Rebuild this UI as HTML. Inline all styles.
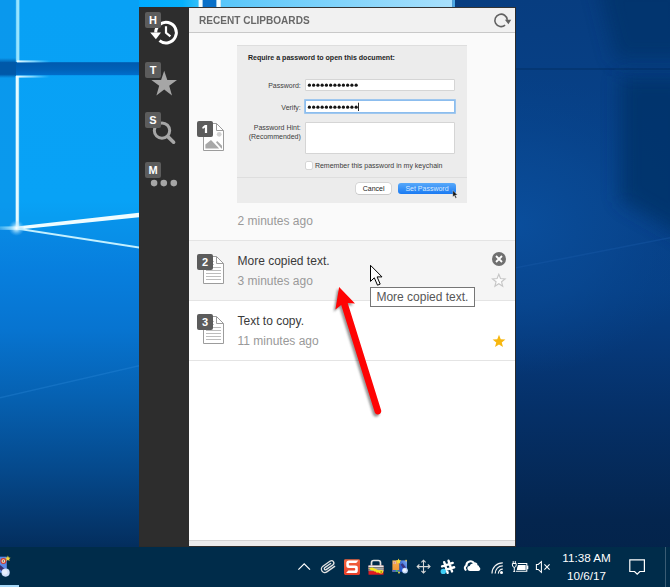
<!DOCTYPE html>
<html>
<head>
<meta charset="utf-8">
<title>Recent Clipboards</title>
<style>
html,body{margin:0;padding:0;}
body{width:670px;height:587px;overflow:hidden;position:relative;background:#073d80;font-family:"Liberation Sans",sans-serif;}
.abs{position:absolute;}
#bg{position:absolute;left:0;top:0;width:670px;height:587px;}
#taskbar{position:absolute;left:0;top:547px;width:670px;height:40px;background:#002c4a;}
.clk{position:absolute;left:536.6px;width:100px;text-align:center;color:#fff;font-size:11.7px;line-height:14px;white-space:nowrap;}
#win{position:absolute;left:139px;top:7px;width:377px;height:540px;background:#fff;}
#side{position:absolute;left:0;top:0;width:50px;height:540px;background:#2d2d2d;}
#hdr{position:absolute;left:50px;top:0;width:326px;height:25px;background:#f1f1f1;border-top:1px solid #333;border-bottom:1px solid #c9c9c9;box-sizing:border-box;height:26px;}
#hdr .t{position:absolute;left:10.4px;top:6px;font-size:11.3px;line-height:13px;font-weight:bold;color:#686868;white-space:nowrap;transform:scaleX(0.89);transform-origin:0 0;}
#rb{position:absolute;right:0;top:0;width:1px;height:540px;background:#2b2b2b;}
#bb{position:absolute;left:0;top:539px;width:377px;height:1px;background:#2b2b2b;}
.item{position:absolute;left:50px;width:326px;box-sizing:border-box;border-bottom:1px solid #e4e4e4;}
.badge{position:absolute;width:16px;height:16px;background:#5c5c5c;border-radius:2px;color:#fff;font-size:11px;font-weight:bold;text-align:center;line-height:16px;}
.sb{position:absolute;width:16px;height:16px;background:#5c5c5c;border-radius:2px;color:#fff;font-size:11px;font-weight:bold;text-align:center;line-height:16px;left:6px;}
.title{position:absolute;left:48.5px;font-size:12px;line-height:14px;color:#3a3a3a;white-space:nowrap;}
.time{position:absolute;left:48.5px;font-size:12px;line-height:14px;color:#999;white-space:nowrap;}

#thumb{position:absolute;left:48px;top:12px;width:230px;height:157.5px;background:#ececec;box-shadow:inset 0 1px 0 #dedede;box-sizing:border-box;font-size:7px;line-height:9px;color:#333;overflow:hidden;}
#thumb > *{margin-top:-1px;}
#thumb .h{position:absolute;left:11px;top:9.1px;font-weight:bold;color:#1e1e1e;white-space:nowrap;font-size:7.05px;}
#thumb .lbl{position:absolute;right:166.2px;white-space:nowrap;text-align:right;color:#3c3c3c;}
#thumb .inp{position:absolute;left:69.4px;width:147.3px;background:#fff;box-shadow:0 0 0 0.6px #c6c6c6;}
#thumb .inp.foc{box-shadow:0 0 0 1.8px #8cbdee;}
#thumb .cb{position:absolute;left:68.7px;top:118px;width:6.5px;height:6.7px;background:#fff;box-shadow:0 0 0 0.5px #bdbdbd;border-radius:1px;}
#thumb .cbt{position:absolute;left:77.9px;top:116.9px;white-space:nowrap;color:#3c3c3c;}
#thumb .sep{position:absolute;left:0;top:133px;width:230px;height:1px;background:#dedede;}
#thumb .btn{position:absolute;top:139px;height:11.2px;line-height:11.4px;border-radius:3px;text-align:center;font-size:7px;}
#foot{position:absolute;left:50px;top:533px;width:326px;height:6px;background:#ececec;border-top:1px solid #d4d4d4;box-sizing:border-box;}
#tip{position:absolute;left:370px;top:287px;width:105px;height:20px;box-sizing:border-box;border:1px solid #767676;background:#fff;color:#575757;font-size:12px;line-height:19px;padding-left:5.4px;white-space:nowrap;}
</style>
</head>
<body>
<svg id="bg" width="670" height="587" viewBox="0 0 670 587">
  <defs>
    <linearGradient id="gA" x1="0" y1="0" x2="0" y2="587" gradientUnits="userSpaceOnUse"><stop offset="0.0" stop-color="#08a1f5"/><stop offset="0.3407" stop-color="#08a2f6"/><stop offset="0.3782" stop-color="#089cf0"/><stop offset="1.0" stop-color="#089cf0"/></linearGradient>
    <linearGradient id="gB" x1="0" y1="0" x2="0" y2="587" gradientUnits="userSpaceOnUse"><stop offset="0.0" stop-color="#0894ec"/><stop offset="0.3663" stop-color="#0894ec"/><stop offset="0.4259" stop-color="#088de6"/><stop offset="1.0" stop-color="#088de6"/></linearGradient>
    <linearGradient id="gC" x1="0" y1="0" x2="0" y2="587" gradientUnits="userSpaceOnUse"><stop offset="0.0" stop-color="#0889e4"/><stop offset="0.3884" stop-color="#0889e4"/><stop offset="0.46" stop-color="#077fde"/><stop offset="0.5622" stop-color="#0774d0"/><stop offset="0.6814" stop-color="#0660b0"/><stop offset="0.8007" stop-color="#05498c"/><stop offset="0.9029" stop-color="#043468"/><stop offset="0.9302" stop-color="#032e5e"/><stop offset="1.0" stop-color="#032e5e"/></linearGradient>
    <linearGradient id="gR" x1="0" y1="0" x2="0" y2="587" gradientUnits="userSpaceOnUse"><stop offset="0.0" stop-color="#073d80"/><stop offset="0.1704" stop-color="#074086"/><stop offset="0.3407" stop-color="#07428a"/><stop offset="0.494" stop-color="#064086"/><stop offset="0.5963" stop-color="#063878"/><stop offset="0.6985" stop-color="#053068"/><stop offset="0.8859" stop-color="#04254e"/><stop offset="1.0" stop-color="#032248"/></linearGradient>
    <radialGradient id="rp" cx="516" cy="225" r="1" gradientUnits="userSpaceOnUse" gradientTransform="translate(516 225) scale(190 150) translate(-516 -225)">
      <stop offset="0" stop-color="#0a4e9c" stop-opacity="1"/>
      <stop offset="0.5" stop-color="#094892" stop-opacity="0.8"/>
      <stop offset="1" stop-color="#07428a" stop-opacity="0"/>
    </radialGradient>
    <linearGradient id="gt" x1="0" y1="0" x2="1" y2="0">
      <stop offset="0" stop-color="#58c6fa"/>
      <stop offset="1" stop-color="#a8e0fc"/>
    </linearGradient>
    <linearGradient id="gtl" x1="0" y1="0" x2="1" y2="0">
      <stop offset="0" stop-color="#00aaff"/>
      <stop offset="0.7" stop-color="#06b0fa"/>
      <stop offset="1" stop-color="#38c2fa"/>
    </linearGradient>
    <linearGradient id="band" x1="0" y1="0" x2="0" y2="1">
      <stop offset="0" stop-color="#005aae"/>
      <stop offset="0.6" stop-color="#0062ba"/>
      <stop offset="1" stop-color="#006ecc"/>
    </linearGradient>
    <linearGradient id="bandl" x1="0" y1="0" x2="0" y2="1">
      <stop offset="0" stop-color="#0058a8" stop-opacity="0"/>
      <stop offset="0.25" stop-color="#0058a8" stop-opacity="1"/>
      <stop offset="0.8" stop-color="#0058a8" stop-opacity="1"/>
      <stop offset="1" stop-color="#0058a8" stop-opacity="0"/>
    </linearGradient>
    <linearGradient id="hl" x1="0" y1="0" x2="1" y2="0">
      <stop offset="0" stop-color="#f0fcff" stop-opacity="1"/>
      <stop offset="0.5" stop-color="#b0e8ff" stop-opacity="0.7"/>
      <stop offset="1" stop-color="#7ad4ff" stop-opacity="0"/>
    </linearGradient>
    <linearGradient id="vl" x1="0" y1="0" x2="1" y2="0">
      <stop offset="0" stop-color="#60c8fc" stop-opacity="0"/>
      <stop offset="0.3" stop-color="#98e4ff" stop-opacity="1"/>
      <stop offset="0.7" stop-color="#98e4ff" stop-opacity="1"/>
      <stop offset="1" stop-color="#60c8fc" stop-opacity="0"/>
    </linearGradient>
    <linearGradient id="vl2" x1="0" y1="0" x2="1" y2="0">
      <stop offset="0" stop-color="#60c8fc" stop-opacity="0"/>
      <stop offset="0.3" stop-color="#e4faff" stop-opacity="1"/>
      <stop offset="0.7" stop-color="#e4faff" stop-opacity="1"/>
      <stop offset="1" stop-color="#60c8fc" stop-opacity="0"/>
    </linearGradient>
    <radialGradient id="glow" cx="0.5" cy="0.5" r="0.5">
      <stop offset="0" stop-color="#fff" stop-opacity="1"/>
      <stop offset="0.35" stop-color="#c8f0ff" stop-opacity="0.7"/>
      <stop offset="1" stop-color="#6cc4ff" stop-opacity="0"/>
    </radialGradient>
    <linearGradient id="lg" x1="0" y1="0" x2="1" y2="0">
      <stop offset="0" stop-color="#9ae4ff" stop-opacity="0.35"/>
      <stop offset="1" stop-color="#d8f8ff" stop-opacity="0.95"/>
    </linearGradient>
    <filter id="b2" x="-40%" y="-40%" width="180%" height="180%"><feGaussianBlur stdDeviation="9"/></filter>
    <filter id="b1" x="-5%" y="-50%" width="110%" height="200%"><feGaussianBlur stdDeviation="0.6"/></filter>
  </defs>
  <!-- left -->
  <rect x="0" y="0" width="200" height="260" fill="url(#gA)"/>
  <rect x="0" y="0" width="16" height="230" fill="#0c92e8" opacity="0.6"/>
  <path d="M16.5 228 L200 207.8 V300 H16.5 Z" fill="url(#gB)"/>
  <path d="M0 228 H16.5 L200 256.4 V587 H0 Z" fill="url(#gC)"/>
  <!-- right -->
  <rect x="450" y="0" width="220" height="587" fill="url(#gR)"/>
  <rect x="516" y="60" width="154" height="330" fill="url(#rp)"/>
  <path d="M620 76 V200 L690 240 V76 Z" fill="#043068" opacity="0.8" filter="url(#b2)"/>
  <rect x="516" y="68" width="154" height="2" fill="#01264e" opacity="0.3"/>
  <path d="M596 -20 H690 V60 H616 Z" fill="#043068" opacity="0.7" filter="url(#b2)"/>
  <path d="M516 267 L670 237 V238.6 L516 268.6 Z" fill="#1a5aa8" opacity="0.4"/>
  <!-- top strip -->
  <rect x="139" y="0" width="62" height="8" fill="url(#gtl)"/>
  <rect x="202" y="0" width="15" height="8" fill="#0870c8"/>
  <rect x="198.6" y="0" width="4" height="8" fill="#eefcff"/>
  <rect x="216.4" y="0" width="4.5" height="8" fill="#f2fdff"/>
  <rect x="220.9" y="0" width="231.6" height="8" fill="url(#gt)"/>
  <rect x="452.4" y="0" width="2.6" height="8" fill="#4aa8e4"/>
  <!-- dark band -->
  <rect x="0" y="62.2" width="140" height="13" fill="url(#band)"/>
  <rect x="0" y="58" width="16" height="20" fill="url(#bandl)"/>
  <!-- bright lines -->
  <rect x="15.2" y="0" width="5" height="62" fill="url(#vl)"/>
  <rect x="14.8" y="76" width="5" height="152" fill="url(#vl2)"/>
  <rect x="17" y="60.4" width="34" height="2" fill="url(#hl)"/>
  <rect x="16" y="75.6" width="34" height="2" fill="url(#hl)"/>
  <!-- rays from bright point -->
  <path d="M16.5 226.4 L139 212.8 V217.2 L16.5 229.8 Z" fill="#eefcff" filter="url(#b1)"/>
  <path d="M16.5 227.4 L139 246.4 V248.4 L16.5 229.6 Z" fill="#c4f0ff" filter="url(#b1)"/>
  <rect x="0" y="226.4" width="17" height="3.4" fill="url(#lg)"/>
  <circle cx="16.5" cy="228" r="8" fill="url(#glow)"/>
  <!-- faint rays lower -->
  <path d="M0 397 L139 365 V366.4 L0 398.4 Z" fill="#3a98e8" opacity="0.25"/>
</svg>


<div id="win">
  <div id="side">
    <!-- history icon -->
    <svg class="abs" style="left:0;top:0" width="50" height="200" viewBox="0 0 50 200">
      <g fill="none" stroke="#fff" stroke-width="3">
        <path d="M16.7 25.6 A10.3 10.3 0 1 1 20.5 33.6"/>
        <path d="M27 19.2 V25.8 L31.4 29.4" stroke-width="2.2"/>
      </g>
      <path d="M11.2 25.6 H22 L16.9 32.2 Z" fill="#fff"/>
      <!-- star -->
      <path d="M25.2 63.8 L28.3 73 L38 73 L30.2 78.8 L33 88.4 L25.2 82.6 L17.4 88.4 L20.2 78.8 L12.4 73 L22.1 73 Z" fill="#a6a6a6"/>
      <!-- magnifier -->
      <circle cx="23" cy="123.6" r="7.7" fill="none" stroke="#a6a6a6" stroke-width="3"/>
      <path d="M28.6 129.4 L34.6 135.2" stroke="#a6a6a6" stroke-width="3.6" stroke-linecap="round"/>
      <!-- dots -->
      <circle cx="15.1" cy="176.1" r="3.3" fill="#a6a6a6"/>
      <circle cx="24.8" cy="176.1" r="3.3" fill="#a6a6a6"/>
      <circle cx="34.8" cy="176.1" r="3.3" fill="#a6a6a6"/>
    </svg>
    <div class="sb" style="top:5px">H</div>
    <div class="sb" style="top:55px">T</div>
    <div class="sb" style="top:105px">S</div>
    <div class="sb" style="top:155px">M</div>
  </div>
  <div id="hdr"><div class="t">RECENT CLIPBOARDS</div>
    <svg class="abs" style="left:304px;top:3px" width="20" height="18" viewBox="0 0 20 18">
      <path d="M12.09 14.15 A6.2 6.2 0 1 1 14.28 8.86" fill="none" stroke="#626262" stroke-width="1.6"/>
      <path d="M11.9 8.8 H18.2 L15.4 13.2 Z" fill="#626262"/>
    </svg>
  </div>

  <!-- item 1 -->
  <div class="item" style="top:26px;height:208px;background:#fafafa;">
    <svg class="abs" style="left:12px;top:88px" width="26" height="32" viewBox="0 0 26 32">
      <path d="M2.5 2.5 H15.5 L22.5 9.5 V29.5 H2.5 Z" fill="#fff" stroke="#9c9c9c" stroke-width="1"/>
      <path d="M15.5 2.5 V9.5 H22.5" fill="none" stroke="#9c9c9c" stroke-width="1"/>
      <circle cx="18.2" cy="13.3" r="2.4" fill="#d2d2d2"/>
      <path d="M4.4 27.5 V23.4 L10 19 L18.2 27.5 Z" fill="#a8a8a8"/>
      <path d="M15 21.2 L16.2 20 L21 24.8 V27.5 H20.4 Z" fill="#a8a8a8"/>
    </svg>
    <div class="badge" style="left:8px;top:88px"><svg width="16" height="16" viewBox="0 0 16 16" style="display:block"><path d="M7.9 3.9 H10.1 V12 H7.9 V6.4 L5.8 7.9 L5.2 6.3 Z" fill="#fff"/></svg></div>
    <div id="thumb">
      <div class="h">Require a password to open this document:</div>
      <div class="lbl" style="top:36.6px">Password:</div>
      <div class="inp" style="top:36px;height:10.2px"></div>
      <div class="lbl" style="top:58.9px">Verify:</div>
      <div class="inp foc" style="top:57.4px;height:10.4px"></div>
      <svg class="abs" style="left:68px;top:34px" width="60" height="36" viewBox="0 0 60 36">
        <g fill="#141414">
          <g id="dr"><circle cx="4.4" cy="7.2" r="1.6"/><circle cx="8.65" cy="7.2" r="1.6"/><circle cx="12.9" cy="7.2" r="1.6"/><circle cx="17.15" cy="7.2" r="1.6"/><circle cx="21.4" cy="7.2" r="1.6"/><circle cx="25.65" cy="7.2" r="1.6"/><circle cx="29.9" cy="7.2" r="1.6"/><circle cx="34.15" cy="7.2" r="1.6"/><circle cx="38.4" cy="7.2" r="1.6"/><circle cx="42.65" cy="7.2" r="1.6"/><circle cx="46.9" cy="7.2" r="1.6"/><circle cx="51.15" cy="7.2" r="1.6"/></g>
          <use href="#dr" y="22"/>
          <rect x="53.1" y="24.7" width="0.9" height="8.3"/>
        </g>
      </svg>
      <div class="lbl" style="top:79.1px">Password Hint:</div>
      <div class="lbl" style="top:88.1px">(Recommended)</div>
      <div class="inp" style="top:79.2px;height:30.2px"></div>
      <div class="cb"></div>
      <div class="cbt">Remember this password in my keychain</div>
      <div class="sep"></div>
      <div class="btn" style="left:118.8px;width:35.7px;background:#fff;color:#222;box-shadow:0 0 0 0.5px #c0c0c0, 0 0.5px 0.5px #bbb;">Cancel</div>
      <div class="btn" style="left:161px;width:58px;background:linear-gradient(#58a9fa,#1a7af2);color:#d8eaff;">Set Password</div>
      <svg class="abs" style="left:215px;top:146.2px" width="6.8" height="9.35" viewBox="0 0 8 11"><path d="M1 0.5 V8 L2.8 6.4 L4.2 9.6 L5.4 9 L4 6 L6.4 6 Z" fill="#111" stroke="#eee" stroke-width="0.4"/></svg>
    </div>
    <div class="time" style="top:180.6px">2 minutes ago</div>
  </div>

  <!-- item 2 -->
  <div class="item" style="top:234px;height:60px;background:#f5f5f5;">
    <svg class="abs doc" style="left:12px;top:13px" width="26" height="32" viewBox="0 0 26 32">
      <path d="M2.5 2.5 H15.5 L22.5 9.5 V29.5 H2.5 Z" fill="#fff" stroke="#9c9c9c" stroke-width="1"/>
      <path d="M15.5 2.5 V9.5 H22.5" fill="none" stroke="#9c9c9c" stroke-width="1"/>
      <path d="M5 13.5 H20 M5 16.5 H20 M5 19.5 H20 M5 22.5 H20 M5 25.5 H20 M11.6 7.5 H13 M11.6 10.5 H13" stroke="#bdbdbd" stroke-width="1"/>
    </svg>
    <div class="badge" style="left:8px;top:13px">2</div>
    <div class="title" style="top:13.4px">More copied text.</div>
    <div class="time" style="top:33.1px">3 minutes ago</div>
    <svg class="abs" style="left:302px;top:9.5px" width="16" height="16" viewBox="0 0 16 16">
      <circle cx="8" cy="8" r="7" fill="#707070"/>
      <path d="M5 5 L11 11 M11 5 L5 11" stroke="#fff" stroke-width="1.8"/>
    </svg>
    <svg class="abs" style="left:302px;top:32px" width="16" height="16" viewBox="0 0 16 16">
      <path d="M7.80 1.30 L9.50 5.55 L14.08 5.86 L10.56 8.80 L11.68 13.24 L7.80 10.80 L3.92 13.24 L5.04 8.80 L1.52 5.86 L6.10 5.55 Z" fill="#fbfbfb" stroke="#c6c6c6" stroke-width="1.15" stroke-linejoin="miter"/>
    </svg>
  </div>

  <!-- item 3 -->
  <div class="item" style="top:294px;height:60px;background:#fff;">
    <svg class="abs doc" style="left:12px;top:13px" width="26" height="32" viewBox="0 0 26 32">
      <path d="M2.5 2.5 H15.5 L22.5 9.5 V29.5 H2.5 Z" fill="#fff" stroke="#9c9c9c" stroke-width="1"/>
      <path d="M15.5 2.5 V9.5 H22.5" fill="none" stroke="#9c9c9c" stroke-width="1"/>
      <path d="M5 13.5 H20 M5 16.5 H20 M5 19.5 H20 M5 22.5 H20 M5 25.5 H20 M11.6 7.5 H13 M11.6 10.5 H13" stroke="#bdbdbd" stroke-width="1"/>
    </svg>
    <div class="badge" style="left:8px;top:13px">3</div>
    <div class="title" style="top:13.3px">Text to copy.</div>
    <div class="time" style="top:33.1px">11 minutes ago</div>
    <svg class="abs" style="left:302px;top:32px" width="16" height="16" viewBox="0 0 16 16">
      <path d="M8 1.8 L9.75 6.2 L14.4 6.5 L10.75 9.45 L12 14 L8 11.45 L4 14 L5.25 9.45 L1.6 6.5 L6.25 6.2 Z" fill="#f7b70f"/>
    </svg>
  </div>

  <div id="foot"></div>
  <div id="rb"></div>
  <div id="bb"></div>
</div>

<!-- tooltip -->
<div id="tip">More copied text.</div>

<!-- red arrow -->
<svg class="abs" style="left:320px;top:275px" width="80" height="150" viewBox="320 275 80 150">
  <defs><filter id="sh" x="-30%" y="-10%" width="160%" height="120%"><feGaussianBlur stdDeviation="1.3"/></filter></defs>
  <g transform="translate(-1.8,2.2)" opacity="0.5" filter="url(#sh)">
    <path d="M339.1 286.9 L355.0 303.4 L347.7 303.1 L381.2 410.6 A3.4 3.4 0 0 1 374.8 412.6 L341.2 305.1 L335.4 309.5 Z" fill="#333"/>
  </g>
  <path d="M339.1 286.9 L355.0 303.4 L347.7 303.1 L381.2 410.6 A3.4 3.4 0 0 1 374.8 412.6 L341.2 305.1 L335.4 309.5 Z" fill="#ff0404"/>
</svg>

<!-- cursor -->
<svg class="abs" style="left:369px;top:264px" width="15" height="24" viewBox="0 0 15 24">
  <path d="M1.5 1.3 V17.4 L5.3 13.8 L8.5 21.2 L11.2 20.1 L8.1 12.9 H13 Z" fill="#fff" stroke="#000" stroke-width="1" stroke-linejoin="miter"/>
</svg>

<div id="taskbar">
  <svg class="abs" style="left:0;top:0" width="670" height="40" viewBox="0 547 670 40">
    <defs><linearGradient id="sng" x1="0" y1="0" x2="0" y2="1"><stop offset="0" stop-color="#f2663e"/><stop offset="1" stop-color="#e63e2a"/></linearGradient></defs>
    <!-- left app icon -->
    <rect x="0" y="556.7" width="6.8" height="16" fill="#5a8ae6"/>
    <path d="M0 565 L6.8 570.5 V573 H4 L0 569.5 Z" fill="#3a2f6e"/>
    <circle cx="3.4" cy="561" r="2.4" fill="#f4e8c8" stroke="#d23a2a" stroke-width="1.1"/>
    <circle cx="3.4" cy="561" r="0.8" fill="#444"/>
    <path d="M7.9 555.6 L8.7 557.5 L10.6 557.7 L9.2 559 L9.6 561 L7.9 560 L6.2 561 L6.6 559 L5.2 557.7 L7.1 557.5 Z" fill="#f6d73c"/>
    <circle cx="5.6" cy="572.6" r="4.1" fill="#cfdffa"/>
    <circle cx="4.8" cy="572" r="2.6" fill="#e8f0fe"/>
    <rect x="0" y="585" width="19" height="2" fill="#a6d8f8"/>
    <!-- chevron -->
    <path d="M298.4 569.6 L304.2 563.8 L310 569.6" fill="none" stroke="#fff" stroke-width="1.2"/>
    <!-- paperclip -->
    <g transform="translate(328.1 566.8) rotate(-35)" fill="none" stroke="#e2e2e2" stroke-width="1.35" stroke-linecap="round">
      <path d="M4 -1.2 H-3.2 A1.2 1.2 0 0 0 -3.2 1.2 H5.07 A2.33 2.33 0 0 0 5.07 -3.45 H-3.95 A3.45 3.45 0 0 0 -3.95 3.45 H5.6"/>
    </g>
    <!-- snagit -->
    <rect x="344" y="559.2" width="16" height="15.8" rx="1.4" fill="url(#sng)"/>
    <path d="M358.4 560.4 L356.2 562.9 H349.6 Q348.8 562.9 348.8 563.8 V564.6 Q348.8 565.4 349.6 565.4 H355.2 Q357.8 565.4 357.8 567.8 V570.4 Q357.8 573 355.2 573 H346.1 L348.3 570.5 H354.4 Q355.2 570.5 355.2 569.7 V568.7 Q355.2 567.9 354.4 567.9 H348.9 Q346.3 567.9 346.3 565.4 V563 Q346.3 560.4 348.9 560.4 Z" fill="#fff"/>
    <!-- padlock -->
    <path d="M371.5 566 V562.8 Q371.5 560.5 373.8 560.5 H378.2 Q380.5 560.5 380.5 562.8 V566" fill="none" stroke="#e2e2e2" stroke-width="1.7"/>
    <rect x="368.5" y="565.7" width="15" height="9" fill="#e01b22"/>
    <rect x="368.5" y="565.7" width="15" height="5.4" fill="#8c8c8c"/>
    <rect x="368.5" y="565.5" width="15" height="1.5" fill="#ececec"/>
    <rect x="368.5" y="567" width="15" height="0.8" fill="#5a5a5a"/>
    <rect x="368.5" y="567.8" width="15" height="1" fill="#d0d0d0"/>
    <rect x="368.5" y="568.7" width="15" height="0.8" fill="#6a6a6a"/>
    <rect x="376" y="569.5" width="7.5" height="2" fill="#b4b4b4"/>
    <path d="M369.4 568 L372.4 567.6 L378.6 570.2 Q381 569.4 382.8 570.6 Q383.8 572.2 382.4 573.2 Q380.2 574 378.4 572.6 L376.6 572.8 L375.6 571.6 L374.2 571.6 L373.4 570.6 L371.8 570.4 L369.6 569.2 Z" fill="#f4e61c"/>
    <circle cx="381.2" cy="572" r="0.8" fill="#7a5a1a"/>
    <!-- picture tool -->
    <defs>
      <linearGradient id="pto" x1="0" y1="0" x2="0" y2="1"><stop offset="0" stop-color="#f6ae52"/><stop offset="1" stop-color="#ee9232"/></linearGradient>
      <linearGradient id="ptb" x1="1" y1="0" x2="0" y2="1"><stop offset="0" stop-color="#86aef2"/><stop offset="0.6" stop-color="#3466d4"/><stop offset="1" stop-color="#2450c0"/></linearGradient>
    </defs>
    <rect x="392.4" y="560.4" width="7.2" height="11.4" fill="url(#pto)"/>
    <rect x="399.4" y="560.4" width="7.6" height="11.4" fill="url(#ptb)"/>
    <rect x="392.4" y="570" width="7.2" height="1.8" fill="#3a66d0"/>
    <rect x="393.2" y="561.6" width="2.8" height="2.2" fill="#e8dccc"/>
    <rect x="393.6" y="562.4" width="1.8" height="1" fill="#d85050"/>
    <rect x="395.8" y="570" width="1.8" height="1.8" fill="#4cc04c"/>
    <path d="M400.6 564.6 L402.6 563.2 L406 567.6 L403.8 569.4 Z" fill="#3a3480"/>
    <circle cx="405" cy="570.6" r="2.9" fill="#c4d8f8"/>
    <circle cx="404.6" cy="570.2" r="1.7" fill="#eef4fe"/>
    <path d="M398.6 558.6 L399.4 560.3 L401.3 560.5 L399.9 561.8 L400.3 563.7 L398.6 562.7 L396.9 563.7 L397.3 561.8 L395.9 560.5 L397.8 560.3 Z" fill="#f8dc3a"/>
    <rect x="398.2" y="571.8" width="1.6" height="1.6" fill="#f4e23a"/>
    <rect x="405.4" y="559.8" width="1.4" height="1.6" fill="#f0c848"/>
    <!-- move cross -->
    <g fill="none" stroke="#d8d8d8" stroke-width="1.1">
      <path d="M423.5 560.4 V572.8 M417.4 566.6 H429.8"/>
      <path d="M421.4 562.4 L423.5 560.2 L425.6 562.4 M421.4 570.8 L423.5 573 L425.6 570.8 M419.4 564.5 L417.2 566.6 L419.4 568.7 M427.8 564.5 L430 566.6 L427.8 568.7"/>
    </g>
    <!-- slack -->
    <g transform="translate(448.1 566.8) rotate(-18)" stroke="#fff" stroke-width="2.4" stroke-linecap="round" fill="none">
      <path d="M-2.3 -5.6 V5.6 M2.3 -5.6 V5.6 M-5.6 -2.3 H5.6 M-5.6 2.3 H5.6"/>
    </g>
    <circle cx="443.3" cy="571.4" r="2.7" fill="#3dcdf6"/>
    <!-- onedrive -->
    <path d="M465.6 569.8 A2.6 2.6 0 0 1 466.4 565.6 A4.2 4.2 0 0 1 474.2 563.4 Q475.6 563.4 476.4 564.2" fill="none" stroke="#fff" stroke-width="2.1" stroke-linecap="round"/>
    <path d="M470 570.9 A2.5 2.5 0 0 1 469.7 565.9 A3.3 3.3 0 0 1 475.8 565.1 A2.5 2.5 0 0 1 479.2 567.1 A2 2 0 0 1 478.4 570.9 Z" fill="#fff"/>
    <!-- wifi -->
    <g fill="none" stroke="#f0f0f0" stroke-width="1.25">
      <path d="M498.4 573.6 A4.2 4.2 0 0 1 502.8 569.2"/>
      <path d="M495.2 573.6 A7.4 7.4 0 0 1 502.8 566"/>
      <path d="M492 573.6 A10.6 10.6 0 0 1 502.8 562.8"/>
    </g>
    <circle cx="501.5" cy="572.5" r="1.5" fill="#fff"/>
    <!-- battery -->
    <path d="M517.8 563.4 H526.8 V571.3 H516" fill="none" stroke="#fff" stroke-width="1.05"/>
    <rect x="527" y="565.6" width="1.3" height="3.6" fill="#fff"/>
    <path d="M518 565 H525.7 V570 H516.8 L517.2 567.4 Z" fill="#fff"/>
    <path d="M513.2 561.1 V563.4 M515.3 561.1 V563.4" stroke="#fff" stroke-width="1"/>
    <path d="M512.4 563.5 H516.2 V565 Q516.2 567.2 514.3 567.4 Q512.4 567.2 512.4 565 Z M514.3 567.4 V571.8 M513.3 571.4 H515.2" fill="none" stroke="#fff" stroke-width="1"/>
    <!-- speaker -->
    <path d="M536.4 564.4 H538.2 L541.4 561.6 V572.4 L538.2 569.4 H536.4 Z" fill="none" stroke="#fff" stroke-width="1.05" stroke-linejoin="miter"/>
    <path d="M544.4 564.4 L549.6 569.6 M549.6 564.4 L544.4 569.6" stroke="#fff" stroke-width="1.1"/>
    <!-- action center -->
    <path d="M629.8 559.9 H644.4 V571.5 H639.8 L637.2 574.2 L634.6 571.5 H629.8 Z" fill="none" stroke="#fff" stroke-width="1.2"/>
    <rect x="665" y="547" width="1" height="40" fill="#3a5c74"/>
  </svg>
  <div class="clk" style="top:4.2px">11:38 AM</div>
  <div class="clk" style="top:21.6px">10/6/17</div>
</div>

</body>
</html>
